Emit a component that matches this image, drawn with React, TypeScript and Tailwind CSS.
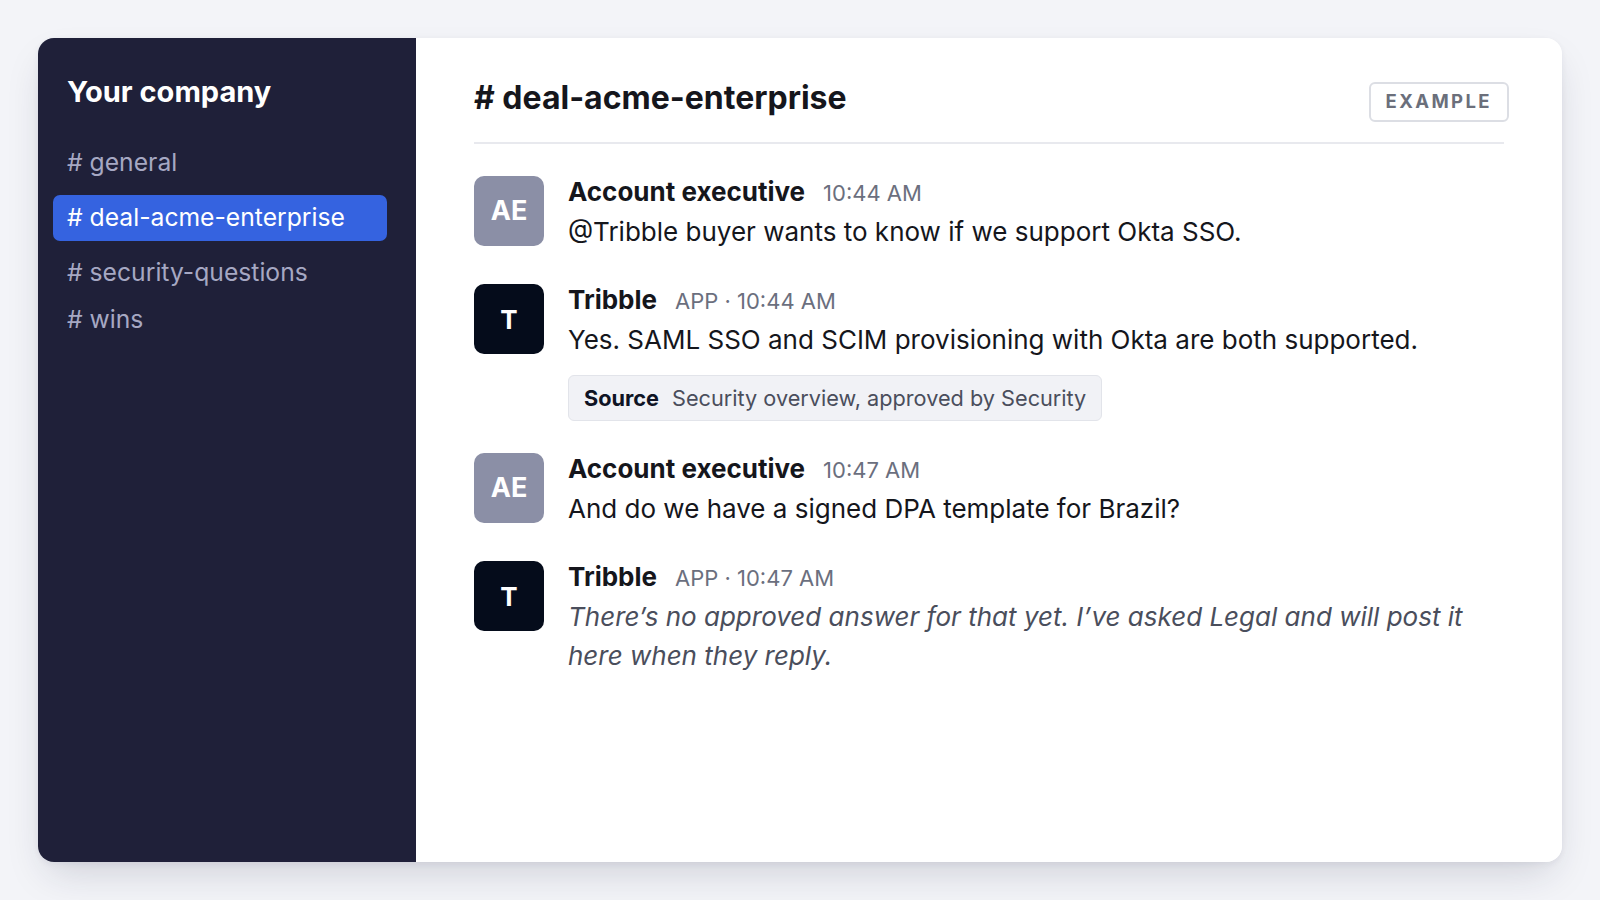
import React from "react";

const channels = ["general", "deal-acme-enterprise", "security-questions", "wins"];

function Avatar({ label, dark }: { label: string; dark?: boolean }) {
  return (
    <div
      className={`w-[70px] h-[70px] shrink-0 rounded-[10px] flex items-center justify-center text-white font-bold ${
        dark ? "bg-[#050c1b] text-[26px]" : "bg-[#8b8fa6] text-[27px]"
      }`}
    >
      {label}
    </div>
  );
}

function Message({
  avatar,
  dark,
  name,
  meta,
  children,
}: {
  avatar: string;
  dark?: boolean;
  name: string;
  meta: string;
  children: React.ReactNode;
}) {
  return (
    <div className="flex gap-6 items-start">
      <Avatar label={avatar} dark={dark} />
      <div className="flex flex-col min-w-0">
        <div className="flex items-baseline gap-[18px] h-[32px]">
          <span className="text-[26px] font-bold text-[#15161c] leading-[32px]">{name}</span>
          <span className="text-[22px] text-[#6b6f7e] leading-[32px]">{meta}</span>
        </div>
        <div className="mt-[4px] flex flex-col">{children}</div>
      </div>
    </div>
  );
}

export default function App() {
  return (
    <div
      className="w-full h-screen bg-[#f3f4f8] p-[38px]"
      style={{ fontFamily: "Inter, 'Noto Sans', sans-serif" }}
    >
      <div className="flex h-full rounded-[16px] overflow-hidden shadow-[0_18px_40px_-10px_rgba(30,35,60,0.18),0_2px_6px_rgba(30,35,60,0.06)]">
        <aside className="w-[378px] shrink-0 bg-[#1f2039] px-[29px] pt-[37px]">
          <div className="text-[29px] font-bold text-white leading-[34px]">Your company</div>
          <nav className="mt-[31px] flex flex-col gap-[1px]">
            {channels.map((c) =>
              c === "deal-acme-enterprise" ? (
                <div
                  key={c}
                  className="-ml-[14px] pl-[14px] my-2 h-[46px] flex items-center rounded-[7px] bg-[#3563e0] text-white text-[24.7px]"
                >
                  # {c}
                </div>
              ) : (
                <div key={c} className="h-[46px] flex items-center text-[24.7px] text-[#a6a8c3]">
                  # {c}
                </div>
              )
            )}
          </nav>
        </aside>
        <main className="flex-1 bg-white px-[58px] pt-[40px]">
          <div className="flex items-start justify-between pb-[20px] border-b-2 border-[#e8e9ee]">
            <h1 className="text-[32px] font-bold text-[#15161c] leading-[40px]"># deal-acme-enterprise</h1>
            <div className="mt-[4px] -mr-[5px] h-[40px] px-[15px] flex items-center rounded-[6px] border-2 border-[#dcdee4] text-[18.5px] font-bold tracking-[0.13em] text-[#6b6f7b]">
              EXAMPLE
            </div>
          </div>
          <div className="flex flex-col gap-[32px] pt-[32px]">
            <Message avatar="AE" name="Account executive" meta="10:44 AM">
              <p className="text-[26px] leading-[40px] text-[#15161c]">
                @Tribble buyer wants to know if we support Okta SSO.
              </p>
            </Message>
            <Message avatar="T" dark name="Tribble" meta="APP · 10:44 AM">
              <p className="text-[26px] leading-[40px] text-[#15161c]">
                Yes. SAML SSO and SCIM provisioning with Okta are both supported.
              </p>
              <div className="mt-[15px] self-start inline-flex items-center h-[46px] px-[15px] rounded-[6px] border border-[#e2e4ea] bg-[#f1f2f6] text-[21.7px]">
                <span className="font-bold text-[#0f1424]">Source</span>
                <span className="ml-[13px] text-[#4a4e5c]">Security overview, approved by Security</span>
              </div>
            </Message>
            <Message avatar="AE" name="Account executive" meta="10:47 AM">
              <p className="text-[26px] leading-[40px] text-[#15161c]">
                And do we have a signed DPA template for Brazil?
              </p>
            </Message>
            <Message avatar="T" dark name="Tribble" meta="APP · 10:47 AM">
              <p className="text-[26px] leading-[39px] italic text-[#4a4e5c]">
                There’s no approved answer for that yet. I’ve asked Legal and will post it here when they reply.
              </p>
            </Message>
          </div>
        </main>
      </div>
    </div>
  );
}
